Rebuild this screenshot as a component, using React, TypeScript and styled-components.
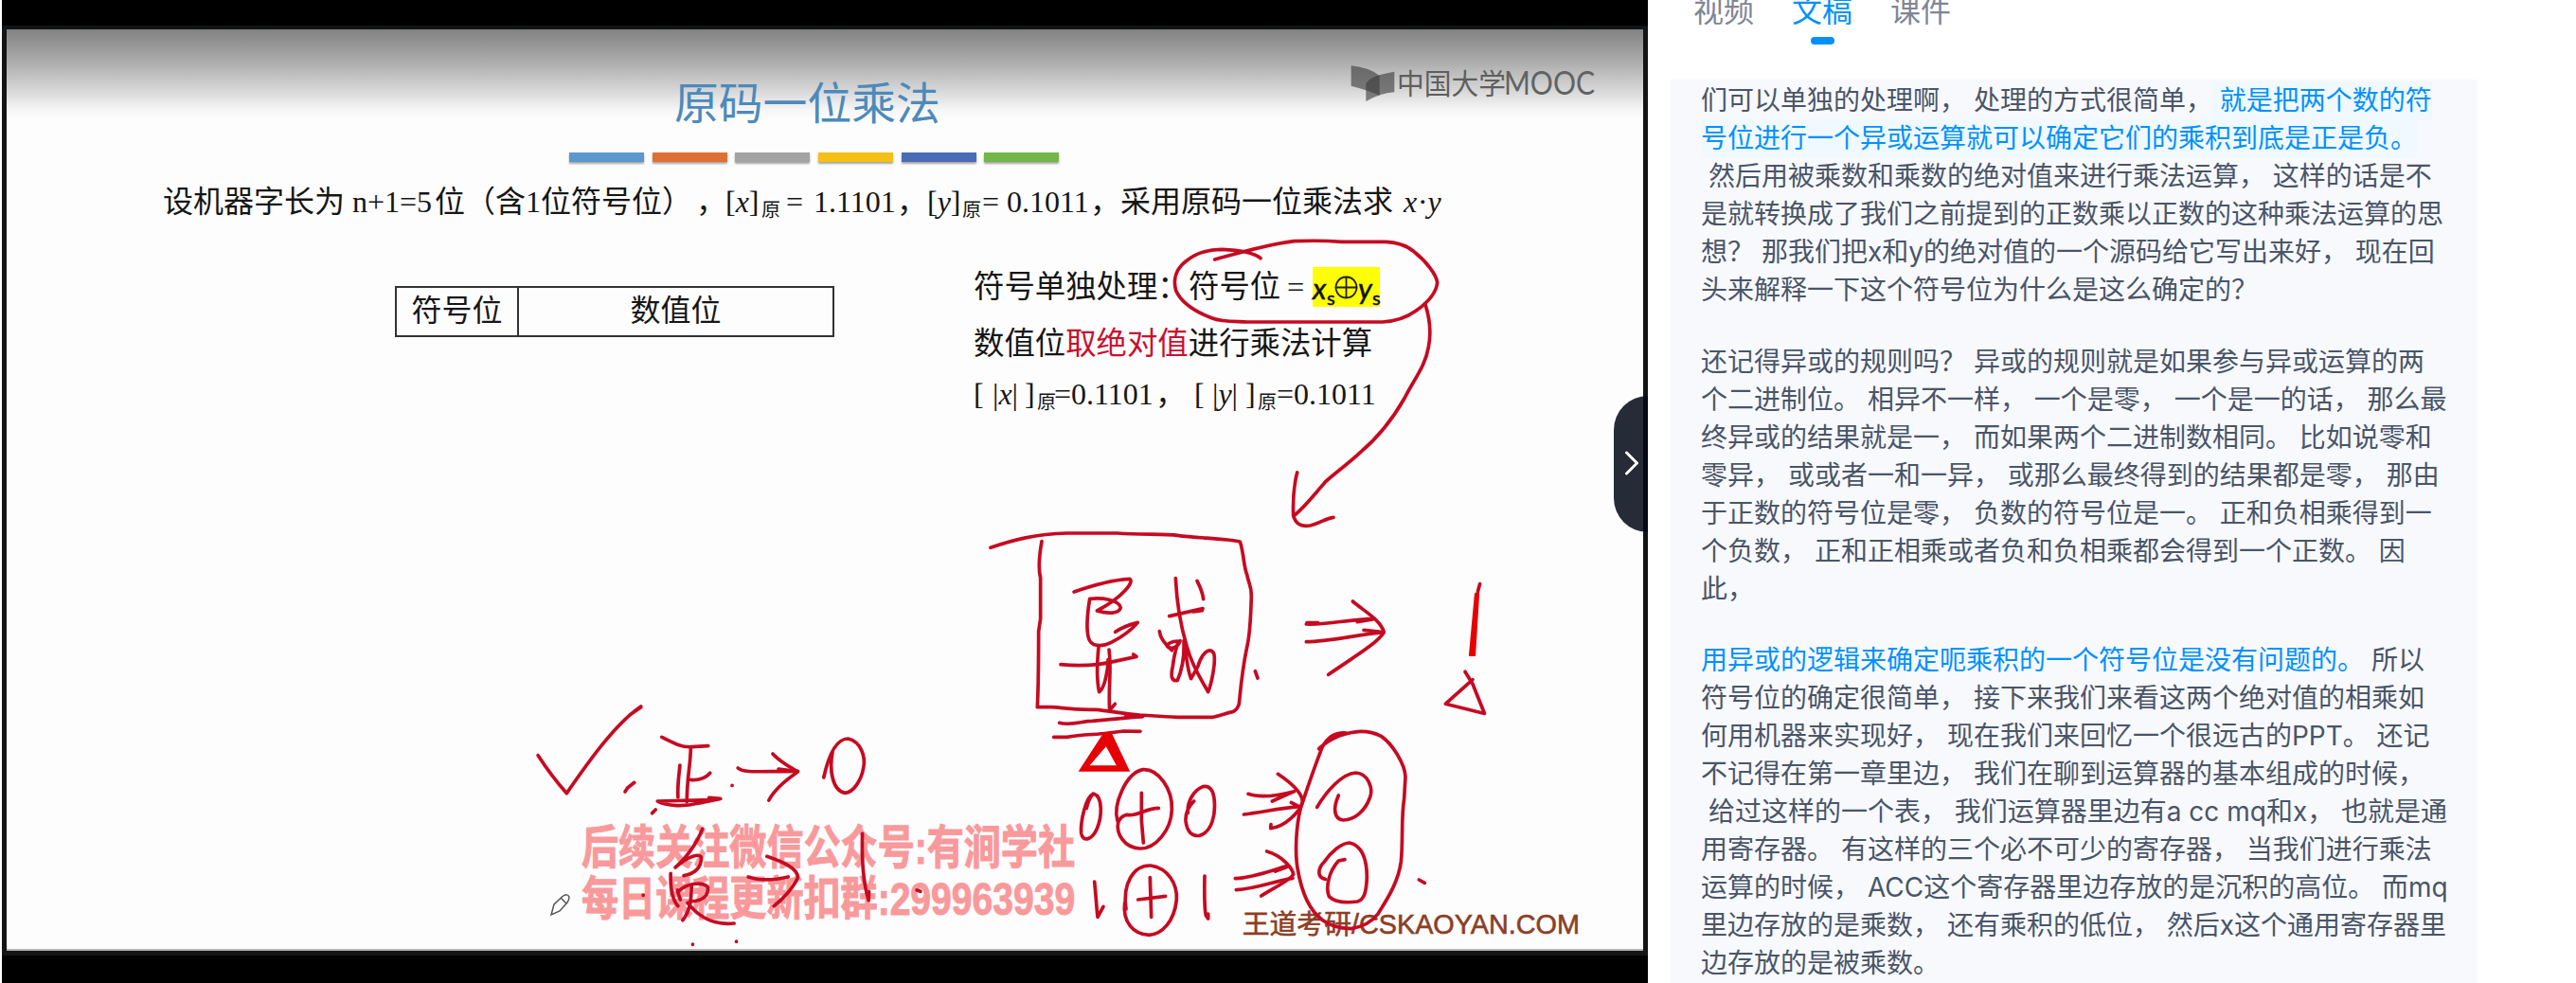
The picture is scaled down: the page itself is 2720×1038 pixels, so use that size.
import React from "react";
import styled, { createGlobalStyle } from "styled-components";

const GlobalStyle = createGlobalStyle`
  * { box-sizing: border-box; }
  body { margin: 0; background: #fff; overflow: hidden; }
`;

const SERIF = `"Liberation Serif", "Noto Sans CJK SC", serif`;
const SANS = `"Inter", "Noto Sans CJK SC", sans-serif`;

const Page = styled.div`
  display: flex;
  width: 2720px;
  height: 1038px;
  overflow: hidden;
  background: #fff;
`;

/* ---------- video ---------- */

const Player = styled.section`
  position: relative;
  width: 1738px;
  height: 1038px;
  margin-left: 2px;
  padding: 27px 0 0;
  background: #000;
  flex: none;
`;

const Frame = styled.div`
  height: 982px;
  padding: 4px 5px 5px;
  background: #131415;
`;

const Slide = styled.div`
  display: flex;
  flex-direction: column;
  height: 973px;
  border-bottom: 2px solid #b4b4b4;
  background: linear-gradient(to bottom, #828282 0, #a9a9a9 32px, #d2d2d2 61px, #f6f6f6 85px, #fdfdfd 96px);
  color: #161616;
  font-family: ${SERIF};
  font-weight: 400;
`;

const Title = styled.h1`
  margin: 49px 0 0 705px;
  height: 60px;
  line-height: 60px;
  font-size: 46.8px;
  font-weight: 400;
  color: #4c8abb;
  white-space: nowrap;
`;

const Bars = styled.div`
  display: flex;
  gap: 8.7px;
  margin: 21px 0 0 594px;
`;

const Bar = styled.i<{ $color: string }>`
  width: 79px;
  height: 10px;
  background: ${(p) => p.$color};
  box-shadow: 0 2px 2px rgba(0, 0, 0, 0.35);
`;

const Line = styled.div<{ $top?: number; $left?: number; $size?: number }>`
  display: flex;
  height: 48px;
  line-height: 48px;
  margin: ${(p) => p.$top ?? 0}px 0 0 ${(p) => p.$left ?? 0}px;
  font-size: ${(p) => p.$size ?? 32}px;
  white-space: pre;
`;

const Seg = styled.span<{ $w: number; $red?: boolean }>`
  flex: none;
  width: ${(p) => p.$w}px;
  color: ${(p) => (p.$red ? "#c8102e" : "inherit")};
`;

const Product = styled(Seg)`
  letter-spacing: 1.6px;
`;

const Sub = styled(Seg)`
  font-size: 20px;
  padding-top: 9px;
`;

const Body = styled.div`
  display: flex;
  margin-top: 42px;
`;

const WordTable = styled.div`
  display: grid;
  grid-template-columns: 129px 1fr;
  width: 464px;
  height: 54px;
  margin: 23px 0 0 410px;
  border: 2px solid #333;
`;

const Cell = styled.div<{ $divided?: boolean }>`
  height: 50px;
  line-height: 48px;
  font-size: 32px;
  text-align: center;
  border-right: ${(p) => (p.$divided ? "2px solid #333" : "none")};
`;

const Notes = styled.div`
  margin-left: 147px;
`;

const Mark = styled.span`
  display: flex;
  width: 71px;
  height: 42px;
  margin-top: 3px;
  line-height: 45px;
  background: #ffff00;
  font-family: "Lato", sans-serif;
  color: #111;
  -webkit-text-stroke: 0.5px #111;
`;

const Var = styled.i<{ $w: number }>`
  width: ${(p) => p.$w}px;
  font-size: 31px;
`;

const Idx = styled.span<{ $w: number }>`
  width: ${(p) => p.$w}px;
  padding: 10px 0 0 1px;
  font-size: 20px;
`;

const XorSign = styled.svg`
  flex: none;
  width: 25px;
  height: 42px;
`;

const SlideFooter = styled.footer`
  display: flex;
  justify-content: space-between;
  align-items: flex-end;
  margin-top: auto;
  padding: 0 67px 8px 607px;
`;

const Watermark = styled.div`
  height: 108px;
  margin-bottom: 18px;
  transform: scaleY(1.25);
  font-family: "Liberation Sans", "Noto Sans CJK SC", sans-serif;
  font-size: 39.1px;
  font-weight: 700;
  line-height: 43px;
  padding-top: 11px;
  color: #f9999b;
  -webkit-text-stroke: 0.8px #f9999b;
  white-space: nowrap;
`;

const Credit = styled.div`
  font-family: "Liberation Sans", "Noto Sans CJK SC", sans-serif;
  font-size: 28.8px;
  font-weight: 400;
  line-height: 36px;
  color: #8c3f26;
  -webkit-text-stroke: 0.6px #8c3f26;
  white-space: nowrap;
`;

const Overlay = styled.svg`
  position: absolute;
  left: -2px;
  top: 0;
  width: 1740px;
  height: 1038px;
  pointer-events: none;
`;

const Collapse = styled.button`
  position: absolute;
  right: 0;
  top: 418px;
  display: flex;
  align-items: center;
  width: 36px;
  height: 144px;
  padding: 0 0 0 10px;
  border: 0;
  border-radius: 36px 0 0 36px;
  background: rgba(2, 8, 23, 0.86);
`;

/* ---------- transcript ---------- */

const Side = styled.aside`
  display: flex;
  flex-direction: column;
  width: 980px;
  padding-left: 24px;
  font-family: ${SANS};
`;

const Tabs = styled.nav`
  display: flex;
  gap: 40px;
  height: 84px;
  padding-left: 24px;
`;

const Tab = styled.div<{ $active?: boolean }>`
  display: flex;
  flex-direction: column;
  align-items: center;
  width: 64px;
  margin-top: -12px;
  font-size: 32px;
  line-height: 48px;
  white-space: nowrap;
  color: ${(p) => (p.$active ? "#0091ff" : "#808695")};
  &::after {
    content: "";
    width: 25px;
    height: 8px;
    margin-top: 3px;
    border-radius: 4px;
    background: ${(p) => (p.$active ? "#0091ff" : "transparent")};
  }
`;

const Transcript = styled.article`
  width: 852px;
  height: 954px;
  padding: 2px 32px 0;
  background: #f7f9fd;
  overflow: hidden;
`;

const Para = styled.p`
  margin: 0 0 35.6px;
  font-size: 28px;
  line-height: 40px;
  color: #4a5568;
  white-space: pre;
`;

const Said = styled.span<{ $current?: boolean }>`
  display: inline-block;
  vertical-align: top;
  height: 41px;
  color: #0091ff;
  background: ${(p) => (p.$current ? "#f0f9ff" : "transparent")};
`;

const Row = styled.span`
  display: block;
  height: 40px;
`;

const barColors = ["#5b98cd", "#df7033", "#a3a3a3", "#f4c014", "#4a6bb6", "#72b747"];

const rule = [
  "还记得异或的规则吗？ 异或的规则就是如果参与异或运算的两",
  "个二进制位。 相异不一样， 一个是零， 一个是一的话， 那么最",
  "终异或的结果就是一， 而如果两个二进制数相同。 比如说零和",
  "零异， 或或者一和一异， 或那么最终得到的结果都是零， 那由",
  "于正数的符号位是零， 负数的符号位是一。 正和负相乘得到一",
  "个负数， 正和正相乘或者负和负相乘都会得到一个正数。 因",
  "此，",
];

const registers = [
  "符号位的确定很简单， 接下来我们来看这两个绝对值的相乘如",
  "何用机器来实现好， 现在我们来回忆一个很远古的PPT。 还记",
  "不记得在第一章里边， 我们在聊到运算器的基本组成的时候，",
  " 给过这样的一个表， 我们运算器里边有a cc mq和x， 也就是通",
  "用寄存器。 有这样的三个必不可少的寄存器， 当我们进行乘法",
  "运算的时候， ACC这个寄存器里边存放的是沉积的高位。 而mq",
  "里边存放的是乘数， 还有乘积的低位， 然后x这个通用寄存器里",
  "边存放的是被乘数。",
];

/* Pen strokes, grouped by the region of the slide they were drawn in. */
const strokes = [
  {
    t: "translate(1210 240) scale(.33333)",
    d: [
      "M218 102C300 80 380 55 470 44C520 42 570 42 620 46H760C800 48 830 60 850 78C890 110 920 150 923 175C920 210 890 240 855 265C820 290 790 298 750 300H320C280 298 240 300 210 288C150 265 110 235 95 200C85 165 95 130 130 105C165 78 200 70 240 70C290 72 340 78 363 98",
      "M884 242C900 290 905 330 895 380C885 440 850 480 820 540C780 610 730 670 680 712C640 750 590 785 570 805C530 850 500 890 468 914",
      "M479 777C468 820 465 860 467 914C475 940 490 950 520 945C550 938 570 922 594 919",
    ],
  },
  {
    t: "translate(1030 540) scale(.33333)",
    d: [
      "M48 115C120 90 190 72 290 69H450C520 75 600 70 640 76C700 85 790 85 838 96C850 130 850 180 860 200C865 230 875 235 874 270C872 340 870 390 860 430C845 500 840 560 835 610Q830 628 815 635C790 640 770 650 750 652H640C580 650 540 645 520 645C450 640 430 632 380 628C300 630 270 620 240 620L196 620C200 540 200 460 200 380L206 340V210C198 180 202 140 210 95",
      "M266 670C300 680 340 664 370 664L460 656L530 649",
      "M480 644L528 650L475 652Z",
      "M248 715H290C340 705 380 708 420 702L470 696L522 697",
      "M312 255C360 238 420 218 488 214C505 220 470 270 385 315C420 325 455 325 460 305C455 280 400 272 362 277C355 320 350 370 358 400C365 430 400 430 430 415C460 400 490 380 514 352C490 358 460 370 443 382",
      "M270 485C340 492 400 485 440 475L510 460L500 453",
      "M390 430C385 480 385 540 392 572C410 560 420 500 420 470",
      "M423 438C432 500 420 560 425 630L442 610",
      "M634 212C638 300 655 380 670 430C690 500 720 540 737 572C750 540 762 470 755 450C740 425 715 455 705 490L683 530C670 500 668 450 660 410C662 450 655 500 640 535C620 540 618 520 625 490C630 450 635 430 645 412C625 410 600 420 610 430C625 440 645 425 648 410",
      "M583 380C585 405 605 425 622 440",
      "M614 332L720 308M718 314L690 318",
      "M702 220C712 240 720 258 722 278",
      "M886 506L894 528",
      "M1048 357C1110 360 1160 345 1258 340M1210 350L1258 342M1050 353H1085",
      "M1048 413C1120 413 1200 392 1292 383M1230 376L1292 383",
      "M1195 285C1230 315 1285 345 1294 383C1270 420 1200 460 1118 517",
    ],
  },
  {
    t: "translate(980 440) scale(.44643 .38138)",
    d: ["M1305 463C1300 480 1295 520 1294 560", "M1270 706L1288 740L1316 822L1224 795L1288 728"],
  },
  {
    t: "translate(1120 720) scale(.33333)",
    d: [
      "M102 355C80 365 62 440 65 480C70 510 100 500 115 465C130 430 135 365 105 355M102 355C90 370 84 390 82 400",
      "M180 440C165 390 205 290 260 278C310 275 355 340 352 405C350 470 300 530 250 528C200 525 175 480 182 445C190 430 195 425 210 421C240 428 270 400 310 400",
      "M256 352V440L262 510",
      "M422 378C400 400 395 420 396 440C400 480 420 490 440 487C480 475 490 420 487 380C485 340 470 328 450 332C420 345 400 380 403 415",
      "M594 355C630 368 690 360 740 347M670 378L740 347",
      "M580 420C640 412 700 400 755 395M730 382L755 395",
      "M688 292C730 320 765 350 766 380C760 410 710 460 665 464L666 452",
      "M905 162C880 160 850 165 828 208C800 280 780 340 760 400C745 460 742 540 750 590C760 650 780 720 830 755C850 770 880 780 920 782C960 775 990 755 1005 735C1040 680 1070 630 1078 570C1085 500 1078 430 1088 370L1092 300C1090 260 1050 195 1015 172C970 150 930 155 880 172C850 185 830 200 818 212",
      "M812 397C840 350 890 290 935 288C975 290 990 340 980 365C965 410 930 437 895 438C865 435 862 400 880 360",
      "M838 625C810 620 815 590 835 570C855 540 890 510 915 510C960 520 970 570 970 620C968 670 960 690 940 696C910 700 870 700 850 680C838 650 850 600 880 567L900 563",
      "M1135 627L1153 637",
      "M107 633C112 680 113 710 117 745L135 712",
      "M207 720C195 640 230 580 285 582C340 590 370 640 367 690C360 760 320 800 280 802C230 800 195 760 203 700",
      "M283 620L287 745M245 690L332 679",
      "M456 615C455 670 455 720 460 740L467 750V735",
      "M553 623C610 620 660 600 718 583M680 600L718 586",
      "M556 659C620 655 680 630 735 622",
      "M653 537C700 550 735 590 737 610C725 630 670 655 635 678",
    ],
  },
  {
    t: "translate(520 720) scale(.40816 .33333)",
    d: [
      "M118 233C140 275 165 315 192 353C250 250 320 130 384 78M355 105L384 80",
      "M343 348L350 335L367 319M413 416L422 405",
      "M438 175C470 195 490 208 515 206L558 203",
      "M513 208C512 270 503 300 503 380",
      "M485 264C482 300 478 330 480 366",
      "M512 310C540 314 555 300 563 289",
      "M427 378C450 395 500 395 530 385L590 370L560 367L565 374Z",
      "M620 328V328.5M390 675V676M518 831V832M631 822V823",
      "M635 273C650 290 690 283 790 283M740 276L785 283",
      "M725 228C745 255 770 270 790 285C760 310 730 340 715 375",
      "M857 303C870 230 890 180 920 180C955 190 965 240 960 270C955 310 935 350 912 352C880 345 870 280 880 220",
      "M543 466C530 510 500 560 473 588C500 560 530 540 540 555C542 590 520 610 495 614",
      "M461 607C460 650 465 690 480 710",
      "M480 665C500 640 540 630 557 650C560 680 540 695 515 695M478 660L486 690",
      "M515 645C515 690 510 730 492 755",
      "M505 700C530 740 570 772 625 765",
      "M662 618C690 630 730 628 765 618",
      "M710 553C750 570 790 590 790 620C780 650 750 690 728 710",
      "M957 481C955 560 960 640 973 692L974 665",
      "M1098 660L1107 664",
    ],
  },
];

function Ink() {
  return (
    <Overlay viewBox="0 0 1740 1038">
      <g transform="translate(1410 50) scale(.33333)">
        <path d="M50 58Q108 64 140 90V153Q112 138 50 122Z" fill="#3c3c3c" fillOpacity=".62" />
        <path d="M97 171V116Q106 90 187 77V142Q140 146 97 171Z" fill="#3c3c3c" fillOpacity=".62" />
      </g>
      <text x="1475" y="98.500" textLength="115" lengthAdjust="spacingAndGlyphs" fontFamily="Noto Sans CJK SC, sans-serif" fontSize="30" fill="#5e5e5e">中国大学</text>
      <text x="1588" y="100" textLength="96" lengthAdjust="spacingAndGlyphs" fontFamily="Lato, sans-serif" fontSize="35" fontWeight="400" fill="#626262">MOOC</text>

      {strokes.map((s) => (
        <g key={s.t} transform={s.t} fill="none" stroke="#c60a22" strokeWidth="3.7" strokeLinecap="round" strokeLinejoin="round">
          {s.d.map((d) => (
            <path key={d} d={d} vectorEffect="non-scaling-stroke" />
          ))}
        </g>
      ))}
      <path d="M1166 774L1173 774L1192 814H1140Z M1168 787L1180 809H1149Z" fill="#e60005" fillRule="evenodd" stroke="#e60005" strokeWidth="1.500" />
      <path d="M1558 627L1561 627L1557 692H1552Z" fill="#e60005" stroke="#e60005" strokeWidth="2.200" strokeLinejoin="round" />
      <path d="M582 966L585 955L594 946.500Q599 943 601 947Q601 950 599 953L591 962ZM592 948L598 954" fill="#fff" stroke="#555" strokeWidth="1.500" />
    </Overlay>
  );
}

function SlideText() {
  return (
    <Slide>
      <Title>原码一位乘法</Title>
      <Bars>
        {barColors.map((c) => (
          <Bar key={c} $color={c} />
        ))}
      </Bars>
      <Line $top={18} $left={165}>
        <Seg $w={200}>设机器字长为</Seg>
        <Seg $w={87}>n+1=5</Seg>
        <Seg $w={276}>位（含1位符号位）</Seg>
        <Seg $w={31}>，</Seg>
        <Seg $w={38}>[<i>x</i>]</Seg>
        <Sub $w={26}>原</Sub>
        <Seg $w={29}>=</Seg>
        <Seg $w={88}>1.1101</Seg>
        <Seg $w={32}>，</Seg>
        <Seg $w={37}>[<i>y</i>]</Seg>
        <Sub $w={21}>原</Sub>
        <Seg $w={26}>=</Seg>
        <Seg $w={88}>0.1011</Seg>
        <Seg $w={32}>，</Seg>
        <Seg $w={299}>采用原码一位乘法求</Seg>
        <Product $w={60}><i>x·y</i></Product>
      </Line>
      <Body>
        <WordTable>
          <Cell $divided>符号位</Cell>
          <Cell>数值位</Cell>
        </WordTable>
        <Notes>
          <Line $size={32.4}>
            <Seg $w={227}>符号单独处理：</Seg>
            <Seg $w={104}>符号位</Seg>
            <Seg $w={27}>=</Seg>
            <Mark>
              <Var $w={14}>x</Var>
              <Idx $w={9}>s</Idx>
              <XorSign viewBox="0 0 25 42">
                <path d="M12.500 10.500a11 11 0 1 0 .01 0ZM12.500 10.500V32.500M1.500 21.500H23.500" fill="none" stroke="#222" strokeWidth="1.800" />
              </XorSign>
              <Var $w={14}>y</Var>
              <Idx $w={9}>s</Idx>
            </Mark>
          </Line>
          <Line $top={12} $size={32.4}>
            <Seg $w={97.2}>数值位</Seg>
            <Seg $w={129.6} $red>取绝对值</Seg>
            <Seg $w={200}>进行乘法计算</Seg>
          </Line>
          <Line $top={5}>
            <Seg $w={20}>[</Seg>
            <Seg $w={34}>|<i>x</i>|</Seg>
            <Seg $w={13}>]</Seg>
            <Sub $w={18}>原</Sub>
            <Seg $w={107}>=0.1101</Seg>
            <Seg $w={41}>，</Seg>
            <Seg $w={19}>[</Seg>
            <Seg $w={35}>|<i>y</i>|</Seg>
            <Seg $w={13}>]</Seg>
            <Sub $w={20}>原</Sub>
            <Seg $w={107}>=0.1011</Seg>
          </Line>
        </Notes>
      </Body>
      <SlideFooter>
        <Watermark>
          后续关注微信公众号:有涧学社
          <br />
          每日课程更新扣群:299963939
        </Watermark>
        <Credit>王道考研/CSKAOYAN.COM</Credit>
      </SlideFooter>
    </Slide>
  );
}

export default function App() {
  return (
    <Page>
      <GlobalStyle />
      <Player>
        <Frame>
          <SlideText />
        </Frame>
        <Ink />
        <Collapse>
          <svg width="20" height="28" viewBox="0 0 20 28">
            <path d="M3.500 2L14.500 13L3.500 24" fill="none" stroke="#fff" strokeWidth="3" strokeLinecap="round" strokeLinejoin="round" />
          </svg>
        </Collapse>
      </Player>
      <Side>
        <Tabs>
          <Tab>视频</Tab>
          <Tab $active>文稿</Tab>
          <Tab>课件</Tab>
        </Tabs>
        <Transcript>
          <Para>
            <Row>
              们可以单独的处理啊， 处理的方式很简单，<Said $current> 就是把两个数的符</Said>
            </Row>
            <Row>
              <Said $current>号位进行一个异或运算就可以确定它们的乘积到底是正是负。</Said>
            </Row>
            <Row>{" 然后用被乘数和乘数的绝对值来进行乘法运算， 这样的话是不"}</Row>
            <Row>是就转换成了我们之前提到的正数乘以正数的这种乘法运算的思</Row>
            <Row>想？ 那我们把x和y的绝对值的一个源码给它写出来好， 现在回</Row>
            <Row>头来解释一下这个符号位为什么是这么确定的？</Row>
          </Para>
          <Para>
            {rule.map((r) => (
              <Row key={r}>{r}</Row>
            ))}
          </Para>
          <Para>
            <Row>
              <Said>用异或的逻辑来确定呃乘积的一个符号位是没有问题的。</Said> 所以
            </Row>
            {registers.map((r) => (
              <Row key={r}>{r}</Row>
            ))}
          </Para>
        </Transcript>
      </Side>
    </Page>
  );
}
